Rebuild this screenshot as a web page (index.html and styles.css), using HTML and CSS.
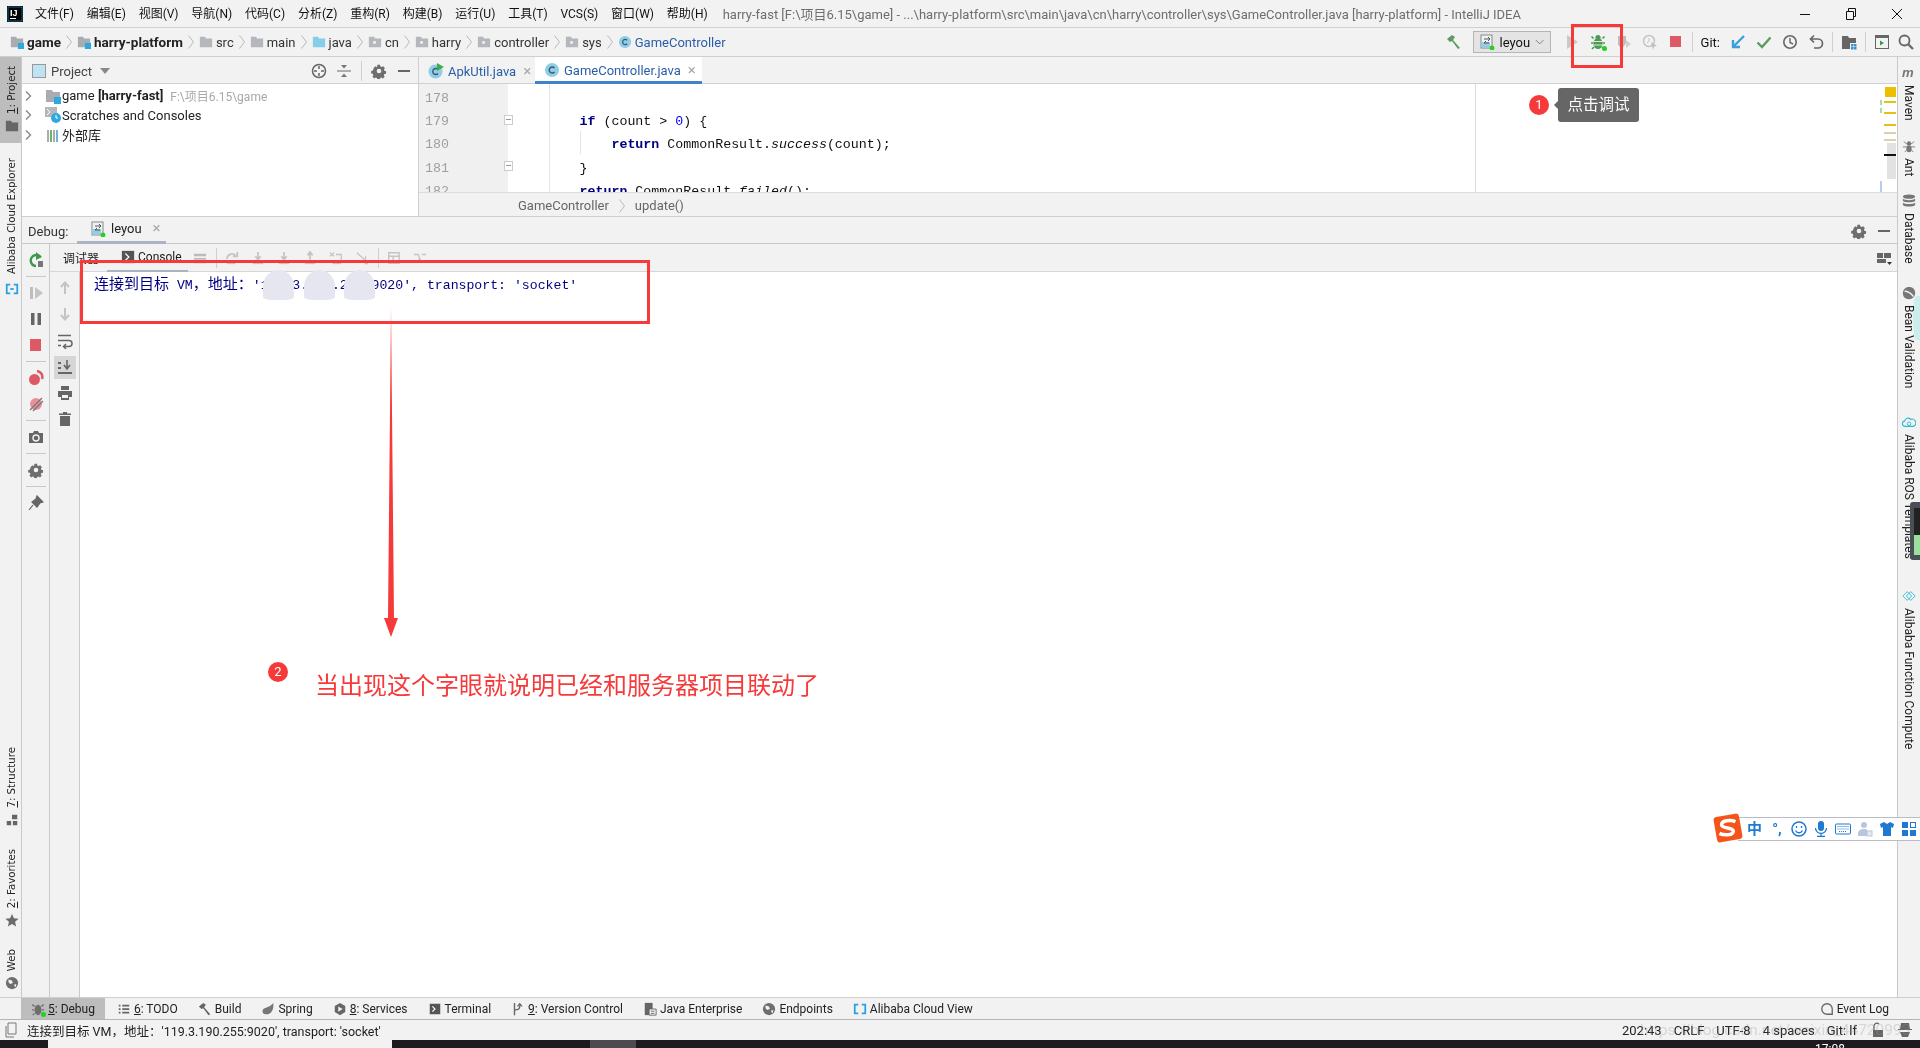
FILE: index.html
```html
<!DOCTYPE html>
<html lang="en">
<head>
    <meta charset="UTF-8">
    <meta name="viewport" content="width=device-width, initial-scale=1.0">
    <title>harry-fast - IntelliJ IDEA</title>
    <link rel="stylesheet" href="styles.css">
</head>
<body>
    <svg class="sprite" xmlns="http://www.w3.org/2000/svg">
        <symbol id="folder" viewBox="0 0 16 16"><path d="M1 2h6l1 2h7v10H1z" fill="#b4b8bc"/><rect x="6" y="7" width="3" height="3" fill="#f2f2f2"/></symbol>
        <symbol id="folder-plain" viewBox="0 0 16 16"><path d="M1 2h6l1 2h7v10H1z" fill="#b4b8bc"/></symbol>
        <symbol id="folder-blue" viewBox="0 0 16 16"><path d="M1 2h6l1 2h7v10H1z" fill="#87cdea"/></symbol>
        <symbol id="module" viewBox="0 0 16 16"><path d="M1 2h6l1 2h7v10H1z" fill="#a9adb2"/><rect x="9" y="9" width="7" height="7" fill="#2fa8e0"/></symbol>
        <symbol id="cls" viewBox="0 0 16 16"><circle cx="8" cy="8" r="7" fill="#8fcde8"/><path d="M10.5 6A3 3 0 1 0 10.5 10" fill="none" stroke="#3a5a6c" stroke-width="1.4"/></symbol>
        <symbol id="cls-run" viewBox="0 0 16 16"><circle cx="7.500" cy="8.500" r="7" fill="#8fcde8"/><path d="M10 6.500A3 3 0 1 0 10 10.500" fill="none" stroke="#3a5a6c" stroke-width="1.4"/><path d="M9 0l7 4-7 4z" fill="#3fae4a"/></symbol>
        <symbol id="chev" viewBox="0 0 8 16"><path d="M1.5 1.5 6.5 8 1.5 14.5" fill="none" stroke="#b8b8b8"/></symbol>
        <symbol id="tree" viewBox="0 0 8 12"><path d="M2 1.500 6.500 6 2 10.500" fill="none" stroke="#888" stroke-width="1.400"/></symbol>
        <symbol id="gear" viewBox="0 0 16 16"><path d="M6.500 1h3l.4 2 1.500.7 1.800-1 2 2.300-1.200 1.600.5 1.500 2 .4v3l-2 .4-.6 1.500 1.100 1.700-2.200 2-1.600-1.100-1.500.5-.4 2h-3l-.4-2-1.500-.6-1.700 1.100-2-2.200 1.100-1.700-.6-1.500-2-.4v-3l2-.4.6-1.500L2 4.900l2.200-2.200 1.700 1.100L6.100 3z" transform="scale(.86) translate(1 1)" fill="#6e6e6e"/><circle cx="8" cy="8" r="2.300" fill="#f2f2f2"/></symbol>
        <symbol id="run-cfg" viewBox="0 0 16 16"><rect x="2" y="1" width="11" height="13" fill="#eef2f5" stroke="#888"/><rect x="2" y="8" width="9" height="5" fill="#8fcde8"/><path d="M5 5h6M9 3l2 2-2 2M10 9H5l2-2" fill="none" stroke="#555"/><circle cx="13" cy="14" r="2.400" fill="#21d321"/></symbol>
        <symbol id="bug" viewBox="0 0 16 16"><ellipse cx="8" cy="9.500" rx="4.500" ry="5.500" fill="#4f9a55"/><circle cx="8" cy="3.500" r="2.600" fill="#4f9a55"/><path d="M3.500 4.500 1.500 2.500M12.500 4.500l2-2M3.500 9H1M12.500 9H15M4 13l-2 2M12 13l2 2" stroke="#4f9a55" stroke-width="1.700"/><path d="M4 7.500h8M4 11h8" stroke="#dfeadf"/></symbol>
        <symbol id="arrow-dn" viewBox="0 0 16 16"><path d="M8 2v11M4 9l4 4.500L12 9" fill="none" stroke="currentColor" stroke-width="2"/></symbol>
        <symbol id="arrow-up" viewBox="0 0 16 16"><path d="M8 14V3M4 7l4-4.500L12 7" fill="none" stroke="currentColor" stroke-width="2"/></symbol>
        <symbol id="step-dn" viewBox="0 0 16 16"><path d="M8 1v8M5 6l3 4 3-4" fill="none" stroke="currentColor" stroke-width="2"/><rect x="2" y="13" width="12" height="2" fill="currentColor"/></symbol>
        <symbol id="step-up" viewBox="0 0 16 16"><path d="M8 10V2M5 5l3-4 3 4" fill="none" stroke="currentColor" stroke-width="2"/><rect x="2" y="13" width="12" height="2" fill="currentColor"/></symbol>
    </svg>

    <header class="titlebar">
        <svg class="app-logo" viewBox="0 0 16 16"><rect width="16" height="16" fill="#000"/><rect x="1" y="1" width="14" height="14" fill="none" stroke="#2aa3e0" stroke-width=".6"/><rect x="3" y="12" width="6" height="1" fill="#fff"/><text x="3" y="9.500" class="app-logo-text">IJ</text></svg>
        <nav class="menu">
            <span>文件(F)</span><span>编辑(E)</span><span>视图(V)</span><span>导航(N)</span><span>代码(C)</span><span>分析(Z)</span><span>重构(R)</span><span>构建(B)</span><span>运行(U)</span><span>工具(T)</span><span>VCS(S)</span><span>窗口(W)</span><span>帮助(H)</span>
        </nav>
        <span class="window-title">harry-fast [F:\项目6.15\game] - ...\harry-platform\src\main\java\cn\harry\controller\sys\GameController.java [harry-platform] - IntelliJ IDEA</span>
        <div class="window-btns">
            <svg viewBox="0 0 12 12"><path d="M1 6.500h10" stroke="#111"/></svg>
            <svg viewBox="0 0 12 12"><path d="M1.500 3.500h7v8h-7zM3.500 3.500v-3h7v8h-2" fill="none" stroke="#111"/></svg>
            <svg viewBox="0 0 12 12"><path d="M1 1l10 10M11 1 1 11" stroke="#111"/></svg>
        </div>
    </header>

    <div class="navbar">
        <div class="crumbs">
            <span class="crumb strong"><svg class="ico"><use href="#module"/></svg>game</span><svg class="chev"><use href="#chev"/></svg>
            <span class="crumb strong"><svg class="ico"><use href="#module"/></svg>harry-platform</span><svg class="chev"><use href="#chev"/></svg>
            <span class="crumb"><svg class="ico"><use href="#folder-plain"/></svg>src</span><svg class="chev"><use href="#chev"/></svg>
            <span class="crumb"><svg class="ico"><use href="#folder-plain"/></svg>main</span><svg class="chev"><use href="#chev"/></svg>
            <span class="crumb"><svg class="ico"><use href="#folder-blue"/></svg>java</span><svg class="chev"><use href="#chev"/></svg>
            <span class="crumb"><svg class="ico"><use href="#folder"/></svg>cn</span><svg class="chev"><use href="#chev"/></svg>
            <span class="crumb"><svg class="ico"><use href="#folder"/></svg>harry</span><svg class="chev"><use href="#chev"/></svg>
            <span class="crumb"><svg class="ico"><use href="#folder"/></svg>controller</span><svg class="chev"><use href="#chev"/></svg>
            <span class="crumb"><svg class="ico"><use href="#folder"/></svg>sys</span><svg class="chev"><use href="#chev"/></svg>
            <span class="crumb link"><svg class="ico"><use href="#cls"/></svg>GameController</span>
        </div>
        <div class="nav-tools">
            <svg class="ico" viewBox="0 0 16 16"><path d="M1 5l5-4 3 2-2 3 7 8-2 1-6-8-2 1z" fill="#5d9b62"/></svg>
            <div class="run-combo"><svg class="ico"><use href="#run-cfg"/></svg><span>leyou</span><svg class="combo-caret" viewBox="0 0 10 6"><path d="M1 1l4 4 4-4" fill="none" stroke="#777"/></svg></div>
            <div class="tool-group run-group">
                <svg class="ico" viewBox="0 0 16 16"><path d="M3 1l11 7-11 7z" fill="#c9c9c9"/></svg>
                <span class="bug-wrap"><svg class="ico"><use href="#bug"/></svg><i class="dot"></i></span>
                <svg class="ico" viewBox="0 0 16 16"><path d="M2 2h8v7l-4 6-4-4z" fill="#bdbdbd"/><path d="M10 6l5 4-5 4z" fill="#cfcfcf"/></svg>
                <svg class="ico" viewBox="0 0 16 16"><circle cx="7" cy="7" r="5.500" fill="none" stroke="#c4c4c4" stroke-width="1.500"/><path d="M7 4v3l-2 2" fill="none" stroke="#c4c4c4"/><path d="M9 8l6 4-3 .5-1 3z" fill="#bdbdbd"/></svg>
                <svg class="ico" viewBox="0 0 16 16"><rect x="2" y="2" width="11" height="11" fill="#dd5a64"/></svg>
            </div>
            <i class="tool-sep"></i>
            <div class="tool-group git-group">
                <span class="git-label">Git:</span>
                <svg class="ico" viewBox="0 0 16 16"><path d="M14 2 4 12M3 6v7h7" fill="none" stroke="#3aa0dc" stroke-width="2.400"/></svg>
                <svg class="ico" viewBox="0 0 16 16"><path d="M1.500 8.500 6 13 14.500 3.500" fill="none" stroke="#5d9b62" stroke-width="2.400"/></svg>
                <svg class="ico" viewBox="0 0 16 16"><circle cx="8" cy="8" r="6.200" fill="none" stroke="#666" stroke-width="1.600"/><path d="M8 4v4.500l3 1.500" fill="none" stroke="#666" stroke-width="1.400"/></svg>
                <svg class="ico" viewBox="0 0 16 16"><path d="M3 5h7a4 4 0 0 1 0 9H6M6 1.500 2.500 5 6 8.500" fill="none" stroke="#666" stroke-width="1.700"/></svg>
            </div>
            <i class="tool-sep"></i>
            <svg class="ico" viewBox="0 0 16 16"><path d="M1 2h6l1 2h7v5H9v6H1z" fill="#666"/><path d="M10 10h2.500v2.500H10zM13 10h2.500v2.500H13zM10 13h2.500v2.500H10zM13 13h2.500v2.500H13z" fill="#3a8fd0"/></svg>
            <i class="tool-sep"></i>
            <svg class="ico" viewBox="0 0 16 16"><rect x="1.500" y="1.500" width="13" height="13" fill="none" stroke="#666"/><rect x="1" y="1" width="14" height="3" fill="#666"/><path d="M6 6.500l4 2.500-4 2.500z" fill="#3d9a4d"/></svg>
            <svg class="ico" viewBox="0 0 16 16"><circle cx="6.500" cy="6.500" r="5" fill="none" stroke="#666" stroke-width="1.800"/><path d="M10 10l5 5" stroke="#666" stroke-width="2.200"/></svg>
        </div>
    </div>

    <div class="workspace">
        <aside class="strip strip-left">
            <div class="strip-group">
                <div class="strip-item active"><span class="strip-label"><u>1</u>: Project</span><svg class="ico-s" viewBox="0 0 16 16"><path d="M1 2h6l1 2h7v10H1z" fill="#666"/></svg></div>
                <div class="strip-item explorer"><span class="strip-label">Alibaba Cloud Explorer</span><svg class="ico-s" viewBox="0 0 16 16"><path d="M6 3H2v10h4M10 3h4v10h-4" fill="none" stroke="#2b9fe6" stroke-width="2"/><path d="M6 8h4" stroke="#2b9fe6" stroke-width="2"/></svg></div>
            </div>
            <div class="strip-group">
                <div class="strip-item"><span class="strip-label"><u>7</u>: Structure</span><svg class="ico-s" viewBox="0 0 16 16"><path d="M8 2h6v5H8zM2 9h5v5H2zM9 9h5v5H9z" fill="#666"/></svg></div>
                <div class="strip-item"><span class="strip-label"><u>2</u>: Favorites</span><svg class="ico-s" viewBox="0 0 16 16"><path d="M8 1l2.200 5 5.300.5-4 3.500 1.200 5.300L8 12.500l-4.700 2.800L4.500 10l-4-3.500L5.800 6z" fill="#6b6b6b"/></svg></div>
                <div class="strip-item"><span class="strip-label">Web</span><svg class="ico-s" viewBox="0 0 16 16"><circle cx="8" cy="8" r="7" fill="#6e6e6e"/><path d="M4 4l4 1 1 3-3 1-2-2zM10 10l3-1-1 4z" fill="#f2f2f2"/></svg></div>
            </div>
        </aside>

        <main class="center">
            <section class="upper">
                <div class="project">
                    <div class="project-head">
                        <svg class="ico" viewBox="0 0 16 16"><rect x="1.500" y="1.500" width="13" height="13" fill="#bfe3f2" stroke="#999"/></svg>
                        <span class="project-title">Project</span>
                        <svg class="caret" viewBox="0 0 10 6"><path d="M0 0h10L5 6z" fill="#888"/></svg>
                        <div class="project-tools">
                            <svg class="ico" viewBox="0 0 16 16"><circle cx="8" cy="8" r="6.500" fill="none" stroke="#666" stroke-width="1.500"/><path d="M8 3v3M8 10v3M3 8h3M10 8h3" stroke="#666" stroke-width="1.500"/></svg>
                            <svg class="ico" viewBox="0 0 16 16"><path d="M1 8h14" stroke="#666"/><path d="M5 2l3 3.500L11 2zM5 14l3-3.500 3 3.500z" fill="#777"/></svg>
                            <i class="tool-sep"></i>
                            <svg class="ico"><use href="#gear"/></svg>
                            <svg class="ico" viewBox="0 0 16 16"><path d="M2 8h12" stroke="#666" stroke-width="2"/></svg>
                        </div>
                    </div>
                    <ul class="tree">
                        <li><svg class="tree-arrow"><use href="#tree"/></svg><svg class="ico"><use href="#module"/></svg>game <b>[harry-fast]</b><span class="tree-path">F:\项目6.15\game</span></li>
                        <li><svg class="tree-arrow"><use href="#tree"/></svg><svg class="ico" viewBox="0 0 16 16"><path d="M0 0h12v10H0z" fill="#b4b8bc"/><path d="M2 2l3 3-3 3" fill="none" stroke="#fff"/><circle cx="11" cy="11" r="5" fill="#2fa8e0"/><path d="M11 8v3h2" fill="none" stroke="#fff"/></svg>Scratches and Consoles</li>
                        <li><svg class="tree-arrow"><use href="#tree"/></svg><svg class="ico" viewBox="0 0 16 16"><path d="M2 3h2v12H2z" fill="#a9adb2"/><path d="M5 3h2v12H5z" fill="#6bb36f"/><path d="M8 3h2v12H8z" fill="#a9adb2"/><path d="M11 3h2v12h-2z" fill="#6db5dc"/></svg>外部库</li>
                    </ul>
                </div>
                <div class="editor">
                    <div class="tabs">
                        <div class="tab"><svg class="ico"><use href="#cls-run"/></svg>ApkUtil.java<span class="tab-x">×</span></div>
                        <div class="tab current"><svg class="ico"><use href="#cls"/></svg>GameController.java<span class="tab-x">×</span></div>
                    </div>
                    <div class="code-area">
                        <div class="gutter">
                            <div>178</div><div>179</div><div>180</div><div>181</div><div>182</div>
                        </div>
                        <div class="fold-col"><i class="fold f1"></i><i class="fold f2"></i></div>
                        <pre class="code">

<b>if</b> (count &gt; <em>0</em>) {
    <b>return</b> CommonResult.<i>success</i>(count);
}
<b>return</b> CommonResult.<i>failed</i>();</pre>
                        <i class="indent-guide"></i>
                        <div class="stripe">
                            <i class="mark m-square"></i><i class="mark m-a"></i><i class="mark m-b"></i><i class="mark m-c"></i><i class="mark m-d"></i><i class="mark m-e"></i><i class="mark m-thumb"></i><i class="mark m-black"></i><i class="mark m-g1"></i><i class="mark m-g2"></i><i class="mark m-blue"></i>
                        </div>
                    </div>
                    <div class="method-crumbs"><span>GameController</span><svg class="chev"><use href="#chev"/></svg><span>update()</span></div>
                </div>
            </section>

            <section class="debug">
                <div class="debug-head">
                    <span class="debug-title">Debug:</span>
                    <div class="debug-tab"><svg class="ico"><use href="#run-cfg"/></svg>leyou<span class="tab-x">×</span></div>
                    <div class="debug-head-tools">
                        <svg class="ico"><use href="#gear"/></svg>
                        <svg class="ico" viewBox="0 0 16 16"><path d="M2 8h12" stroke="#666" stroke-width="2"/></svg>
                    </div>
                </div>
                <div class="debug-body">
                    <div class="dbg-actions">
                        <svg class="ico" viewBox="0 0 16 16"><path d="M12.500 5A5.500 5.500 0 1 0 8 14" fill="none" stroke="#3d9a4d" stroke-width="2.400"/><path d="M8 0l6 5-6 3z" fill="#3d9a4d"/><rect x="10" y="9" width="5" height="6" fill="#777"/></svg>
                        <i class="dbg-sep"></i>
                        <svg class="ico" viewBox="0 0 16 16"><rect x="2" y="2" width="3" height="12" fill="#bdbdbd"/><path d="M7 2l8 6-8 6z" fill="#c4c4c4"/></svg>
                        <svg class="ico" viewBox="0 0 16 16"><path d="M3 2h3.500v12H3zM9.500 2H13v12H9.500z" fill="#666"/></svg>
                        <svg class="ico" viewBox="0 0 16 16"><rect x="2" y="2" width="11" height="12" fill="#dd5a64"/></svg>
                        <i class="dbg-sep"></i>
                        <svg class="ico" viewBox="0 0 16 16"><circle cx="6.500" cy="9.500" r="5.500" fill="#dd5a64"/><path d="M9 1a6 6 0 0 1 5 8" fill="none" stroke="#dd5a64" stroke-width="2.500"/></svg>
                        <svg class="ico" viewBox="0 0 16 16"><circle cx="8" cy="8" r="6" fill="#e8919a"/><path d="M2 14 14 2M5 15 15 5" stroke="#777" stroke-width="1.300"/></svg>
                        <i class="dbg-sep"></i>
                        <svg class="ico" viewBox="0 0 16 16"><path d="M1 4h4l1-2h4l1 2h4v10H1z" fill="#666"/><circle cx="8" cy="9" r="3" fill="none" stroke="#f2f2f2" stroke-width="1.400"/></svg>
                        <i class="dbg-sep"></i>
                        <svg class="ico"><use href="#gear"/></svg>
                        <i class="dbg-sep"></i>
                        <svg class="ico" viewBox="0 0 16 16"><path d="M9 1l6 6-3 1-3 4-5-5 4-3zM5 10l-4 5" fill="#666" stroke="#666" stroke-width="1.200"/></svg>
                    </div>
                    <div class="debug-main">
                        <div class="console-tabs">
                            <span class="ctab">调试器</span>
                            <span class="ctab current"><svg class="ico-s" viewBox="0 0 16 16"><rect x="1" y="1" width="14" height="14" fill="#555"/><path d="M5 4l4 4-4 4" fill="none" stroke="#fff" stroke-width="1.400"/></svg>Console</span>
                            <div class="stepper">
                                <svg class="ico-m" viewBox="0 0 16 16"><path d="M1 3h14v3H1zM1 8h14v2H1zM1 12h14v2H1z" fill="#bbb"/></svg>
                                <i class="tool-sep"></i>
                                <svg class="ico-m" viewBox="0 0 16 16"><path d="M2 9a6 6 0 0 1 10-4M9 6h5V1" fill="none" stroke="#c4c4c4" stroke-width="2"/><rect x="2" y="13" width="10" height="2" fill="#c4c4c4"/></svg>
                                <svg class="ico-m"><use href="#step-dn"/></svg>
                                <svg class="ico-m"><use href="#step-dn"/></svg>
                                <svg class="ico-m"><use href="#step-up"/></svg>
                                <svg class="ico-m" viewBox="0 0 16 16"><path d="M1 2l5 4M1 6l5-4M8 4h6v8" fill="none" stroke="#c4c4c4" stroke-width="1.500"/><rect x="4" y="13" width="10" height="2" fill="#c4c4c4"/></svg>
                                <svg class="ico-m" viewBox="0 0 16 16"><path d="M2 2l9 8M7 11h5V6M11 12l4 3M15 12l-4 3" fill="none" stroke="#c4c4c4" stroke-width="1.500"/></svg>
                                <i class="tool-sep"></i>
                                <svg class="ico-m" viewBox="0 0 16 16"><path d="M2 2h12v12H2zM2 6h12M7 6v8" fill="none" stroke="#c4c4c4" stroke-width="1.500"/></svg>
                                <svg class="ico-m" viewBox="0 0 16 16"><path d="M1 4h5l3 8h6M1 12h5l1-3M10 4h5" fill="none" stroke="#c4c4c4" stroke-width="1.500"/></svg>
                            </div>
                            <svg class="ico layout-ico" viewBox="0 0 16 16"><path d="M1 3h6v5H1zM8 3h7v5H8zM1 9h9v4H1z" fill="#666"/><path d="M11 12h5l-2.500 3z" fill="#333"/></svg>
                        </div>
                        <div class="console-row">
                            <div class="dbg-console-tools">
                                <span class="dbg-cell muted"><svg class="ico"><use href="#arrow-up"/></svg></span>
                                <span class="dbg-cell muted"><svg class="ico"><use href="#arrow-dn"/></svg></span>
                                <span class="dbg-cell"><svg class="ico" viewBox="0 0 16 16"><path d="M1 2.500h13M1 7.500h11a3 3 0 0 1 0 6H7M9 11l-2.500 2.500L9 16M1 12.500h3" fill="none" stroke="#666" stroke-width="1.500"/></svg></span>
                                <span class="dbg-cell on"><svg class="ico" viewBox="0 0 16 16"><path d="M1 3h3v2H1zM1 8h3v2H1zM1 13h14v2H1z" fill="#666"/><path d="M10 1v8M7 6l3 4 3-4" fill="none" stroke="#666" stroke-width="1.600"/></svg></span>
                                <span class="dbg-cell"><svg class="ico" viewBox="0 0 16 16"><path d="M4 1h8v4H4zM1 6h14v6h-3v3H4v-3H1z" fill="#666"/><rect x="5" y="10" width="6" height="3" fill="#f2f2f2"/></svg></span>
                                <span class="dbg-cell"><svg class="ico" viewBox="0 0 16 16"><path d="M6 1h4v1.500h4V4H2V2.500h4zM3 5h10v10H3z" fill="#666"/></svg></span>
                            </div>
                            <pre class="console"><span class="cjk">连接到目标</span> VM<span class="cjk">，地址：</span>'119.3.190.255:9020', transport: 'socket'</pre>
                        </div>
                    </div>
                </div>
            </section>
        </main>

        <aside class="strip strip-right">
            <div class="strip-item"><svg class="ico-s" viewBox="0 0 16 12"><text x="0" y="11" class="maven-m">m</text></svg><span class="strip-label">Maven</span></div>
            <div class="strip-item"><svg class="ico-s" viewBox="0 0 16 16"><ellipse cx="8" cy="11" rx="3" ry="4" fill="#777"/><circle cx="8" cy="5" r="2.500" fill="#777"/><path d="M2 3l4 3M14 3l-4 3M1 9h14M3 15l3-3M13 15l-3-3" stroke="#777"/></svg><span class="strip-label">Ant</span></div>
            <div class="strip-item"><svg class="ico-s" viewBox="0 0 16 16"><ellipse cx="8" cy="3" rx="7" ry="2.500" fill="#777"/><path d="M1 5.500c2 2 12 2 14 0V8c-2 2-12 2-14 0zM1 10c2 2 12 2 14 0v2.500c-2 2.500-12 2.500-14 0z" fill="#777"/></svg><span class="strip-label">Database</span></div>
            <div class="strip-item"><svg class="ico-s" viewBox="0 0 16 16"><path d="M8 1c5 0 7 3 7 7s-3 7-7 7c-5 0-7-3-7-7s3-7 7-7z" fill="#777"/><path d="M3 6c4 0 7 2 10 6" fill="none" stroke="#f2f2f2" stroke-width="1.500"/></svg><span class="strip-label">Bean Validation</span></div>
            <div class="strip-item"><svg class="ico-s" viewBox="0 0 16 16"><path d="M4 13a3 3 0 0 1-1-6 4 4 0 0 1 7-2 3.500 3.500 0 0 1 3 8z" fill="none" stroke="#28b8d8" stroke-width="1.300"/><circle cx="8" cy="10" r="2" fill="none" stroke="#28b8d8"/></svg><span class="strip-label">Alibaba ROS Templates</span></div>
            <div class="strip-item"><svg class="ico-s" viewBox="0 0 16 16"><path d="M1 8l5-5 5 5-5 5zM5 8l5-5 5 5-5 5z" fill="none" stroke="#28b8d8"/></svg><span class="strip-label">Alibaba Function Compute</span></div>
        </aside>
    </div>

    <footer class="tool-bar">
        <span class="tw active"><span class="bug-wrap"><svg class="ico" viewBox="0 0 16 16"><ellipse cx="8" cy="9" rx="4" ry="6" fill="#6e6e6e"/><path d="M4 5 1.500 3M12 5l2.500-2M3.500 9H1M12.500 9H15M4 13l-2 2M12 13l2 2" stroke="#6e6e6e" stroke-width="1.500"/></svg><i class="dot"></i></span><span><u>5</u>: Debug</span></span>
        <span class="tw"><svg class="ico" viewBox="0 0 16 16"><path d="M2 3h2v2H2zM6 3h8v2H6zM2 7h2v2H2zM6 7h8v2H6zM2 11h2v2H2zM6 11h8v2H6z" fill="#666"/></svg><span><u>6</u>: TODO</span></span>
        <span class="tw"><svg class="ico" viewBox="0 0 16 16"><path d="M1 5l5-4 3 2-2 3 7 8-2 1-6-8-2 1z" fill="#666"/></svg><span>Build</span></span>
        <span class="tw"><svg class="ico" viewBox="0 0 16 16"><path d="M14 1c1 7-2 13-8 13-3 0-5-2-4-5s7-2 12-8z" fill="#777"/></svg><span>Spring</span></span>
        <span class="tw"><svg class="ico" viewBox="0 0 16 16"><path d="M8 1l6 3.500v7L8 15l-6-3.500v-7z" fill="#666"/><path d="M6 5l5 3-5 3z" fill="#f2f2f2"/></svg><span><u>8</u>: Services</span></span>
        <span class="tw"><svg class="ico" viewBox="0 0 16 16"><rect x="2" y="2" width="12" height="12" fill="#555"/><path d="M5 5l3 3-3 3" fill="none" stroke="#fff" stroke-width="1.300"/></svg><span>Terminal</span></span>
        <span class="tw"><svg class="ico" viewBox="0 0 16 16"><path d="M4 1v14M4 9c5 0 6-1 6-5M7.500 5 10 2l2.500 3" fill="none" stroke="#666" stroke-width="1.600"/></svg><span><u>9</u>: Version Control</span></span>
        <span class="tw"><svg class="ico" viewBox="0 0 16 16"><path d="M2 1h9v14H2z" fill="#666"/><path d="M7 8h8v7H7z" fill="#f2f2f2" stroke="#666"/><path d="M9 10.500h4M9 13h4" stroke="#666"/></svg><span>Java Enterprise</span></span>
        <span class="tw"><svg class="ico" viewBox="0 0 16 16"><circle cx="8" cy="8" r="7" fill="#6e6e6e"/><path d="M4 4l4 1 1 3-3 1-2-2zM10 10l3-1-1 4z" fill="#f2f2f2"/></svg><span>Endpoints</span></span>
        <span class="tw"><svg class="ico" viewBox="0 0 16 16"><path d="M6 3H2v10h4M10 3h4v10h-4" fill="none" stroke="#2b9fe6" stroke-width="2"/></svg><span>Alibaba Cloud View</span></span>
        <span class="tw event-log"><svg class="ico" viewBox="0 0 16 16"><path d="M13 14H8a6 6 0 1 1 6-6v6z" fill="none" stroke="#666" stroke-width="1.500"/></svg><span>Event Log</span></span>
    </footer>

    <div class="statusbar">
        <svg class="ico" viewBox="0 0 16 16"><path d="M5 1h8v11H5zM3 4v11h8" fill="none" stroke="#777"/></svg>
        <span class="status-msg">连接到目标 VM，地址：'119.3.190.255:9020', transport: 'socket'</span>
        <div class="status-right">
            <span>202:43</span><span>CRLF</span><span>UTF-8</span><span>4 spaces</span><span>Git: lf</span>
            <svg class="ico" viewBox="0 0 16 16"><path d="M5 8V4a3 3 0 0 1 5-2" fill="none" stroke="#666" stroke-width="1.300"/><rect x="4" y="8" width="10" height="7" fill="#666"/></svg>
            <svg class="ico" viewBox="0 0 16 16"><path d="M4 1h8l1 6h2v1H1V7h2zM3 10h10l-2 5H5z" fill="#666"/></svg>
        </div>
    </div>

    <div class="taskbar">
        <i class="task-search"></i>
        <i class="task-active"></i>
        <span class="task-clock">17:08</span>
    </div>

    <!-- annotations on top of the screenshot -->
    <div class="note-box box-debug"></div>
    <div class="note-box box-console"></div>
    <span class="badge badge-one">1</span>
    <div class="tip">点击调试</div>
    <span class="badge badge-two">2</span>
    <div class="note-text">当出现这个字眼就说明已经和服务器项目联动了</div>
    <svg class="note-arrow" viewBox="0 0 20 330"><path d="M10 0 13 310H17L10 329 3 310H7z" fill="#f63a3a"/></svg>
    <i class="blob b1"></i><i class="blob b2"></i><i class="blob b3"></i>

    <div class="ime">
        <svg class="ime-logo" viewBox="0 0 28 28"><rect x="2" y="2" width="24" height="24" rx="3" fill="#f4541a" transform="rotate(-10 14 14)"/><path d="M21 8c-5-2-13-1-13 3s11 2 11 6-9 4-13 2" fill="none" stroke="#fff" stroke-width="3.200"/></svg>
        <span class="ime-zh">中</span>
        <span class="ime-punct">°,</span>
        <svg viewBox="0 0 16 16"><circle cx="8" cy="8" r="7" fill="none" stroke="#1f78d1" stroke-width="1.500"/><path d="M4.500 9.500c1.500 3 5.500 3 7 0" fill="none" stroke="#1f78d1" stroke-width="1.300"/><path d="M5.500 5v2M10.500 5v2" stroke="#1f78d1" stroke-width="1.300"/></svg>
        <svg viewBox="0 0 16 16"><rect x="5" y="0" width="6" height="10" rx="3" fill="#1f78d1"/><path d="M2.500 7a5.500 5.500 0 0 0 11 0M8 13v2M4 15.500h8" fill="none" stroke="#1f78d1" stroke-width="1.300"/></svg>
        <svg viewBox="0 0 16 16"><rect x=".5" y="3" width="15" height="10" rx="1" fill="none" stroke="#1f78d1"/><path d="M2.500 5.500h11M2.500 8h11M4 10.500h8" stroke="#1f78d1" stroke-dasharray="1 1"/></svg>
        <svg viewBox="0 0 16 16"><circle cx="7" cy="4" r="3" fill="#b6c6dc"/><path d="M1 13c0-4 3-5 6-5 2 0 3 .5 3 1v6H1z" fill="#b6c6dc"/><rect x="10" y="10" width="5" height="5" fill="#e5e9ef" stroke="#b6c6dc"/></svg>
        <svg viewBox="0 0 16 16"><path d="M5 1 1 3l1 4 2-1v9h8V6l2 1 1-4-4-2-3 2z" fill="#1f78d1"/></svg>
        <svg viewBox="0 0 16 16"><path d="M1 1h6v6H1zM1 9h6v6H1zM9 9h6v6H9z" fill="#1f78d1"/><rect x="9.500" y="1.500" width="5" height="5" fill="none" stroke="#1f78d1"/></svg>
    </div>

    <span class="watermark">https://blog.csdn.net/weixin_44720993</span>
    <i class="side-meter"></i>
    <i class="side-glow"></i>
</body>
</html>
```

FILE: styles.css
```css
* {
    box-sizing: border-box;
}
html, body {
    height: 100%;
}
body {
    margin: 0;
    display: flex;
    flex-direction: column;
    height: 1048px;
    overflow: hidden;
    position: relative;
    background-color: #f2f2f2;
    color: #1a1a1a;
    font-family: Roboto, "Noto Sans CJK SC", sans-serif;
    font-size: 13px;
}
.sprite {
    display: none;
}
.ico {
    width: 16px;
    height: 16px;
    flex: none;
}
.ico-s {
    width: 14px;
    height: 14px;
    flex: none;
}
.ico-m {
    width: 14px;
    height: 14px;
    flex: none;
    color: #c4c4c4;
}
.chev {
    width: 8px;
    height: 16px;
    flex: none;
}
.tool-sep {
    width: 1px;
    height: 20px;
    background-color: #cfcfcf;
    flex: none;
}

/* title bar */
.titlebar {
    height: 28px;
    display: flex;
    align-items: center;
    flex: none;
    border-bottom: 1px solid #d0d0d0;
}
.app-logo {
    width: 16px;
    height: 16px;
    margin-left: 7px;
    flex: none;
}
.app-logo-text {
    fill: #fff;
    font: bold 9px "Liberation Sans", sans-serif;
}
.menu {
    display: flex;
    gap: 12.800px;
    margin-left: 12px;
    font-size: 12px;
    line-height: 16px;
    color: #111;
}
.window-title {
    margin-left: 15px;
    color: #6e6e6e;
    white-space: nowrap;
}
.window-btns {
    margin-left: auto;
    display: flex;
    gap: 34px;
    padding-right: 17px;
}
.window-btns svg {
    width: 12px;
    height: 12px;
}

/* navigation bar */
.navbar {
    height: 29px;
    display: flex;
    align-items: center;
    flex: none;
    padding-left: 10px;
    border-bottom: 1px solid #cfcfcf;
}
.crumbs {
    display: flex;
    align-items: center;
    gap: 4px;
}
.crumb {
    display: flex;
    align-items: center;
    gap: 3px;
    color: #333;
}
.crumb.strong {
    font-size: 13.500px;
    font-weight: 700;
    color: #222;
}
.crumb.link {
    color: #2a5ea8;
}
.crumb .ico {
    width: 14px;
    height: 14px;
}
.nav-tools {
    margin-left: auto;
    display: flex;
    align-items: center;
    padding-right: 6px;
    gap: 8px;
}
.run-combo {
    width: 78px;
    height: 22px;
    display: flex;
    align-items: center;
    gap: 5px;
    padding: 0 5px;
    margin-left: 3px;
    background-color: #e4e4e4;
    border: 1px solid #b5b5b5;
    color: #111;
}
.combo-caret {
    width: 10px;
    height: 6px;
    margin-left: auto;
}
.tool-group {
    display: flex;
    align-items: center;
}
.run-group {
    gap: 10px;
    margin-left: 5px;
}
.git-group {
    gap: 10px;
}
.git-label {
    color: #111;
}
.bug-wrap {
    position: relative;
    display: flex;
}
.dot {
    position: absolute;
    right: -1px;
    bottom: -1px;
    width: 5px;
    height: 5px;
    border-radius: 50%;
    background-color: #1fd41f;
}

/* body of the window */
.workspace {
    flex: 1;
    display: flex;
    min-height: 0;
}
.strip {
    flex: none;
    display: flex;
    flex-direction: column;
    background-color: #f2f2f2;
}
.strip-left {
    width: 22px;
    justify-content: space-between;
    border-right: 1px solid #c9c9c9;
    padding-bottom: 7px;
    font-family: "DejaVu Sans", sans-serif;
    font-size: 10.200px;
}
.strip-right {
    width: 23px;
    padding-top: 9px;
    border-left: 1px solid #c9c9c9;
    font-size: 12px;
}
.strip-group {
    display: flex;
    flex-direction: column;
}
.strip-group + .strip-group {
    gap: 22px;
}
.strip-item {
    display: flex;
    flex-direction: column;
    align-items: center;
    gap: 5px;
    color: #222;
}
.strip-left .strip-item {
    padding-left: 2px;
}
.strip-left .strip-label {
    transform: rotate(180deg);
}
.strip-label {
    writing-mode: vertical-rl;
    white-space: nowrap;
    line-height: 20px;
}
.strip-item.active {
    background-color: #bdbdbd;
    height: 86px;
    padding-top: 9px;
}
.strip-item.explorer {
    margin-top: 15px;
    gap: 8px;
}
.strip-right .strip-item:nth-child(2),
.strip-right .strip-item:nth-child(3) {
    margin-top: 18px;
}
.strip-right .strip-item:nth-child(4) {
    margin-top: 22px;
}
.strip-right .strip-item:nth-child(5) {
    margin-top: 27px;
}
.strip-right .strip-item:nth-child(6) {
    margin-top: 30px;
}
.maven-m {
    fill: #777;
    font: italic bold 15px "Liberation Sans", sans-serif;
}

.center {
    flex: 1;
    min-width: 0;
    display: flex;
    flex-direction: column;
}
.upper {
    height: 160px;
    flex: none;
    display: flex;
    border-bottom: 1px solid #cfcfcf;
}
.project {
    width: 397px;
    flex: none;
    background-color: #fff;
    border-right: 1px solid #cfcfcf;
}
.project-head {
    height: 27px;
    display: flex;
    align-items: center;
    padding: 2px 0 0 9px;
    background-color: #f2f2f2;
    border-bottom: 1px solid #d0d0d0;
}
.project-title {
    margin-left: 4px;
    color: #444;
}
.caret {
    width: 10px;
    height: 6px;
    margin-left: 8px;
}
.project-tools {
    margin-left: auto;
    display: flex;
    align-items: center;
    gap: 9px;
    padding-right: 6px;
}
.tree {
    list-style: none;
    margin: 0;
    padding: 2px 0 0 0;
}
.tree li {
    height: 19.500px;
    display: flex;
    align-items: center;
    padding-left: 2px;
    white-space: pre;
    color: #222;
}
.tree b {
    font-weight: 700;
}
.tree-arrow {
    width: 8px;
    height: 12px;
    margin-right: 13px;
    flex: none;
}
.tree .ico {
    margin-right: 1px;
}
.tree-path {
    margin-left: 7px;
    color: #a8a8a8;
    font-size: 12px;
}

.editor {
    flex: 1;
    min-width: 0;
    display: flex;
    flex-direction: column;
}
.tabs {
    height: 27px;
    flex: none;
    display: flex;
    border-bottom: 1px solid #d0d0d0;
}
.tab {
    display: flex;
    align-items: center;
    gap: 4px;
    padding: 2px 5px 0 9px;
    color: #2a5ea8;
    width: 116px;
}
.tab.current {
    width: 167px;
    background-color: #fff;
    border-bottom: 3px solid #4083c9;
    height: 27px;
}
.tab-x {
    margin-left: 3px;
    color: #aaa;
    font-size: 15px;
    line-height: 1;
}
.code-area {
    flex: 1;
    min-height: 0;
    display: flex;
    position: relative;
    overflow: hidden;
    background-color: #fff;
    background-image: linear-gradient(#dcdcdc, #dcdcdc);
    background-size: 1px 100%;
    background-position: 1056px 0;
    background-repeat: no-repeat;
    font-family: "Liberation Mono", monospace;
    font-size: 13.300px;
}
.gutter {
    width: 89px;
    flex: none;
    padding: 3px 0 0 6px;
    background-color: #f0f0f0;
    color: #a0a0a0;
    line-height: 23.200px;
}
.fold-col {
    width: 42px;
    flex: none;
    border-right: 1px solid #e4e4e4;
}
.fold {
    position: absolute;
    left: 85px;
    width: 9px;
    height: 10px;
    background-color: #fff;
    border: 1px solid #ccc;
}
.fold::after {
    content: "";
    position: absolute;
    left: 1px;
    right: 1px;
    top: 3px;
    height: 1px;
    background-color: #999;
}
.f1 { top: 31px; }
.f2 { top: 77px; }
.code {
    margin: 3px 0 0 29.500px;
    font: inherit;
    line-height: 23.200px;
    color: #111;
}
.code b {
    color: #000080;
}
.code em {
    font-style: normal;
    color: #0000ff;
}
.indent-guide {
    position: absolute;
    left: 161px;
    top: 47px;
    width: 1px;
    height: 23px;
    background-color: #e4e4e4;
}
.stripe {
    position: absolute;
    top: 0;
    right: 0;
    bottom: 0;
    width: 20px;
}
.mark {
    position: absolute;
    right: 1px;
    width: 12px;
    height: 2px;
}
.m-square { top: 3px; width: 11px; height: 10px; background-color: #ecc000; }
.m-a { top: 17px; background-color: #e8bf16; }
.m-b { top: 28px; background-color: #e8bf16; }
.m-c { top: 40px; background-color: #e8bf16; }
.m-d { top: 48px; background-color: #d9d2ad; }
.m-e { top: 55px; background-color: #d9d2ad; }
.m-thumb { top: 59px; width: 9px; height: 36px; background-color: #e2e2e2; }
.m-black { top: 70px; height: 2px; background-color: #111; }
.m-g1 { top: 16px; right: 15px; width: 2px; height: 5px; background-color: #a9dba9; }
.m-g2 { top: 24px; right: 15px; width: 2px; height: 5px; background-color: #a9dba9; }
.m-blue { top: 97px; right: 15px; width: 2px; height: 12px; background-color: #b5cdf1; }
.method-crumbs {
    height: 24px;
    flex: none;
    display: flex;
    align-items: center;
    gap: 9px;
    padding: 2px 0 0 99px;
    color: #666;
    border-top: 1px solid #dcdcdc;
}

/* debug tool window */
.debug {
    flex: 1;
    min-height: 0;
    display: flex;
    flex-direction: column;
}
.debug-head {
    height: 27px;
    flex: none;
    display: flex;
    align-items: center;
    padding: 2px 0 0 6px;
    border-bottom: 1px solid #c9c9c9;
}
.debug-title {
    width: 49px;
    color: #333;
}
.debug-tab {
    height: 27px;
    width: 89px;
    display: flex;
    align-items: center;
    gap: 5px;
    padding-left: 13px;
    margin-top: -2px;
    color: #222;
    border-bottom: 3px solid #aab4c2;
}
.debug-tab .tab-x {
    margin-left: 6px;
}
.debug-head-tools {
    margin-left: auto;
    display: flex;
    gap: 9px;
    padding-right: 5px;
}
.debug-body {
    flex: 1;
    min-height: 0;
    display: flex;
}
.dbg-actions {
    width: 28px;
    flex: none;
    display: flex;
    flex-direction: column;
    align-items: center;
    padding-top: 8px;
    gap: 8px;
    border-right: 1px solid #c9c9c9;
}
.dbg-actions .ico + .ico {
    margin-top: 2px;
}
.dbg-sep {
    width: 20px;
    height: 1px;
    background-color: #c9c9c9;
    flex: none;
}
.debug-main {
    flex: 1;
    min-width: 0;
    display: flex;
    flex-direction: column;
}
.console-tabs {
    height: 28px;
    flex: none;
    display: flex;
    align-items: center;
    padding-left: 13px;
    border-bottom: 1px solid #d6d6d6;
    font-size: 12px;
}
.ctab {
    display: flex;
    align-items: center;
    height: 28px;
    gap: 3px;
    white-space: nowrap;
}
.ctab.current {
    width: 81px;
    margin-left: 8px;
    padding-left: 14px;
    border-bottom: 2px solid #aab4c2;
}
.stepper {
    display: flex;
    align-items: center;
    gap: 12px;
    margin-left: 5px;
}
.stepper .tool-sep {
    margin: 0 -3.500px;
}
.layout-ico {
    margin-left: auto;
    margin-right: 5px;
}
.console-row {
    flex: 1;
    min-height: 0;
    display: flex;
}
.dbg-console-tools {
    width: 30px;
    flex: none;
    display: flex;
    flex-direction: column;
    align-items: center;
    padding-top: 3px;
    border-right: 1px solid #c9c9c9;
}
.dbg-cell {
    width: 22px;
    height: 26.300px;
    display: flex;
    align-items: center;
    justify-content: center;
}
.dbg-cell.muted {
    color: #c4c4c4;
}
.dbg-cell.on {
    background-color: #d6d6d6;
    height: 23px;
    margin: 2px 0 1px;
}
.console {
    flex: 1;
    min-width: 0;
    margin: 0;
    padding: 1px 0 0 14px;
    background-color: #fff;
    font-family: "Liberation Mono", monospace;
    font-size: 13.200px;
    line-height: 20px;
    color: #000080;
}
.cjk {
    font-family: "Noto Sans CJK SC", sans-serif;
    font-size: 15px;
}

/* bottom bars */
.tool-bar {
    height: 23px;
    flex: none;
    display: flex;
    align-items: center;
    padding-left: 21px;
    border-top: 1px solid #cfcfcf;
    border-bottom: 1px solid #b5b5b5;
    font-size: 12px;
    gap: 20px;
}
.tw {
    display: flex;
    align-items: center;
    gap: 3px;
    color: #222;
    white-space: nowrap;
}
.tw .ico {
    width: 14px;
    height: 14px;
}
.tw.active {
    height: 21px;
    padding: 0 10px;
    margin-right: -8px;
    background-color: #bdbdbd;
}
.tw.event-log {
    margin-left: auto;
    padding-right: 31px;
}
.statusbar {
    height: 20px;
    flex: none;
    display: flex;
    align-items: center;
    padding-left: 3px;
    color: #222;
}
.status-msg {
    margin-left: 8px;
    font-size: 12.500px;
}
.status-right {
    margin-left: auto;
    display: flex;
    align-items: center;
    gap: 12px;
    padding-right: 7px;
}
.taskbar {
    height: 8px;
    flex: none;
    position: relative;
    background-color: #1b1b20;
    overflow: hidden;
}
.task-search {
    position: absolute;
    left: 48px;
    top: 0;
    width: 344px;
    height: 8px;
    background-color: #f2f2f2;
}
.task-active {
    position: absolute;
    left: 590px;
    top: 0;
    width: 46px;
    height: 8px;
    background-color: #4b4b50;
}
.task-clock {
    position: absolute;
    left: 1815px;
    top: 3px;
    color: #fff;
    font-size: 12px;
    line-height: 12px;
}

/* annotations */
.note-box {
    position: absolute;
    border: 3px solid #f63a3a;
}
.box-debug {
    left: 1571px;
    top: 24px;
    width: 52px;
    height: 44px;
}
.box-console {
    left: 80px;
    top: 260px;
    width: 570px;
    height: 64px;
}
.badge {
    position: absolute;
    width: 20px;
    height: 20px;
    border-radius: 50%;
    background-color: #f63a3a;
    color: #fff;
    font-size: 13px;
    line-height: 20px;
    text-align: center;
}
.badge-one {
    left: 1529px;
    top: 95px;
}
.badge-two {
    left: 268px;
    top: 662px;
}
.tip {
    position: absolute;
    left: 1558px;
    top: 88px;
    width: 81px;
    height: 34px;
    border-radius: 3px;
    background-color: #666;
    color: #fff;
    font-size: 15.500px;
    line-height: 34px;
    text-align: center;
}
.tip::before {
    content: "";
    position: absolute;
    left: -4px;
    top: 13px;
    border-style: solid;
    border-width: 4px 4px 4px 0;
    border-color: transparent #666 transparent transparent;
}
.note-text {
    position: absolute;
    left: 315px;
    top: 668px;
    color: #f63a3a;
    font-size: 24px;
    line-height: 36px;
    white-space: nowrap;
}
.note-arrow {
    position: absolute;
    left: 381px;
    top: 308px;
    width: 20px;
    height: 330px;
}
.blob {
    position: absolute;
    top: 270px;
    width: 31px;
    height: 30px;
    border-radius: 50% 50% 30% 30% / 55% 55% 10% 10%;
    background-color: #e6e6f1;
}
.b1 { left: 263px; }
.b2 { left: 304px; }
.b3 { left: 344px; }

/* input method bar */
.ime {
    position: absolute;
    left: 1738px;
    top: 817px;
    width: 182px;
    height: 24px;
    display: flex;
    align-items: center;
    gap: 6px;
    padding-left: 9px;
    background-color: #fff;
    border-top: 1px solid #b9bcc6;
    border-bottom: 1px solid #b9bcc6;
}
.ime svg {
    width: 16px;
    height: 16px;
    flex: none;
}
.ime .ime-logo {
    position: absolute;
    left: -25px;
    top: -5px;
    width: 30px;
    height: 30px;
}
.ime-zh {
    width: 16px;
    color: #1f78d1;
    font-size: 15px;
    font-weight: 700;
    line-height: 20px;
}
.ime-punct {
    width: 16px;
    color: #1f78d1;
    font-size: 15px;
    font-weight: 700;
    line-height: 20px;
    text-align: center;
}
.watermark {
    position: absolute;
    left: 1640px;
    top: 1019px;
    color: rgba(150, 150, 150, 0.3);
    font-size: 15.500px;
    line-height: 22px;
    white-space: nowrap;
}
.side-meter {
    position: absolute;
    left: 1910px;
    top: 502px;
    width: 10px;
    height: 58px;
    border-radius: 3px 0 0 3px;
    background: linear-gradient(#9adf9a, #9adf9a) 4px 33px / 6px 20px no-repeat,
        linear-gradient(#222, #222) 4px 6px / 6px 27px no-repeat,
        #4a4e56;
}
.side-glow {
    position: absolute;
    left: 1913px;
    top: 296px;
    width: 7px;
    height: 44px;
    border-radius: 100% 0 0 100%;
    background-color: #d5fbfb;
    mix-blend-mode: multiply;
}
```
